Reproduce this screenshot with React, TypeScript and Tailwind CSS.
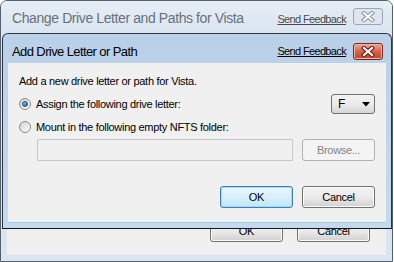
import React from "react";

const font = { fontFamily: '"Liberation Sans", Arial, sans-serif' };

function XGlyph({ stroke }: { stroke: string }) {
  return (
    <svg width="14" height="11" viewBox="0 0 14 11">
      <path d="M3 2 L11 9 M11 2 L3 9" stroke={stroke} strokeWidth="4.2" strokeLinecap="square" fill="none" />
      <path d="M3 2 L11 9 M11 2 L3 9" stroke="#ffffff" strokeWidth="2.2" strokeLinecap="square" fill="none" />
    </svg>
  );
}

function Radio({ checked }: { checked?: boolean }) {
  return (
    <span className="w-[12px] h-[12px] rounded-full border border-[#8a8a8a] bg-gradient-to-br from-[#d4d4d4] to-[#fbfbfb] flex items-center justify-center shrink-0">
      {checked && (
        <span className="w-[6px] h-[6px] rounded-full bg-gradient-to-br from-[#9fd0f5] to-[#1d5f9a] border border-[#1b4d7a]" />
      )}
    </span>
  );
}

function Btn({ children, def, disabled, className = "" }: { children: React.ReactNode; def?: boolean; disabled?: boolean; className?: string }) {
  return (
    <div
      className={
        "h-[22px] w-[73px] rounded-[3px] border flex items-center justify-center text-[11px] tracking-[-0.3px] " +
        (def
          ? "border-[#3c7fb1] bg-gradient-to-b from-[#eaf6fd] via-[#d9f0fc] to-[#bee6fd] shadow-[inset_0_0_0_1px_#a7d9f5] text-black "
          : disabled
          ? "border-[#adb2b5] bg-[#f4f4f4] text-[#838383] "
          : "border-[#707070] bg-gradient-to-b from-[#f2f2f2] via-[#ebebeb] to-[#d1d1d1] shadow-[inset_0_0_0_1px_#fcfcfc] text-black ") +
        className
      }
    >
      {children}
    </div>
  );
}

export default function App() {
  return (
    <div className="w-[394px] h-[262px] bg-white relative overflow-hidden" style={font}>
      {/* Outer window */}
      <div className="absolute left-0 top-0 w-[393px] h-[262px] rounded-t-[7px] border border-[#55606c] bg-[#dae5f1] flex flex-col">
        <div className="h-[32px] shrink-0 flex items-center pl-[11px] pr-[9px] bg-gradient-to-b from-[#e6eef6] to-[#dbe5f0] rounded-t-[6px]">
          <span className="text-[14px] tracking-[-0.4px] text-[#67717d] flex-1 pt-[2px] whitespace-nowrap">Change Drive Letter and Paths for Vista</span>
          <span className="text-[11px] tracking-[-0.65px] text-[#4a4a4a] underline mr-[7px] mt-[4px] whitespace-nowrap">Send Feedback</span>
          <div className="w-[30px] h-[17px] rounded-[3px] border border-[#9aa6b3] bg-[#dde6ef] flex items-center justify-center mb-[1px]">
            <XGlyph stroke="#8a939d" />
          </div>
        </div>
        <div className="flex-1 mx-[6px] mb-[6px] bg-[#f0f0f0] flex flex-col justify-end pb-[13px]">
          <div className="flex justify-end gap-[14px] pr-[16px]">
            <Btn>OK</Btn>
            <Btn>Cancel</Btn>
          </div>
        </div>
      </div>

      {/* Inner dialog */}
      <div className="absolute left-[2px] top-[33px] w-[390px] h-[196px] rounded-t-[6px] border border-[#2b3540] border-b-[#121820] bg-gradient-to-b from-[#bad0e8] to-[#c5daee] flex flex-col">
        <div className="h-[29px] shrink-0 flex items-center pl-[9px] pr-[8px] pt-[6px]">
          <span className="text-[13px] tracking-[-0.6px] text-black flex-1 whitespace-nowrap">Add Drive Letter or Path</span>
          <span className="text-[11px] tracking-[-0.65px] text-black underline mr-[7px] whitespace-nowrap">Send Feedback</span>
          <div className="w-[30px] h-[17px] rounded-[3px] border border-[#7a2a1c] bg-gradient-to-b from-[#e9a898] via-[#d4634b] to-[#c3432a] flex items-center justify-center shadow-[inset_0_0_0_1px_#eeb5a6]">
            <XGlyph stroke="#5b1a10" />
          </div>
        </div>
        <div className="flex-1 mx-[5px] mb-[5px] bg-[#f0f0f0] border-b border-[#9cd0ef] flex flex-col text-[11px] tracking-[-0.3px] text-black pl-[11px] pr-[11px]">
          <div className="mt-[10px] h-[16px] flex items-center whitespace-nowrap">Add a new drive letter or path for Vista.</div>
          <div className="mt-[5px] h-[20px] flex items-center justify-between">
            <div className="flex items-center gap-[5px]">
              <Radio checked />
              <span className="whitespace-nowrap">Assign the following drive letter:</span>
            </div>
            <div className="w-[44px] h-[20px] rounded-[3px] border border-[#707070] bg-gradient-to-b from-[#f2f2f2] via-[#ebebeb] to-[#d6d6d6] flex items-center justify-between pl-[6px] pr-[4px]">
              <span className="text-[12px]">F</span>
              <svg width="8" height="5" viewBox="0 0 8 5"><path d="M0 0 L8 0 L4 4.5 Z" fill="#000" /></svg>
            </div>
          </div>
          <div className="mt-[5px] h-[16px] flex items-center gap-[5px]">
            <Radio />
            <span className="whitespace-nowrap">Mount in the following empty NFTS folder:</span>
          </div>
          <div className="mt-[4px] flex items-center gap-[9px] pl-[18px]">
            <div className="flex-1 h-[22px] border border-[#c6c6c6] bg-[#f0f0f0] rounded-[1px]" />
            <Btn disabled>Browse...</Btn>
          </div>
          <div className="flex-1" />
          <div className="flex justify-end gap-[9px] mb-[14px]">
            <Btn def>OK</Btn>
            <Btn>Cancel</Btn>
          </div>
        </div>
      </div>
    </div>
  );
}
